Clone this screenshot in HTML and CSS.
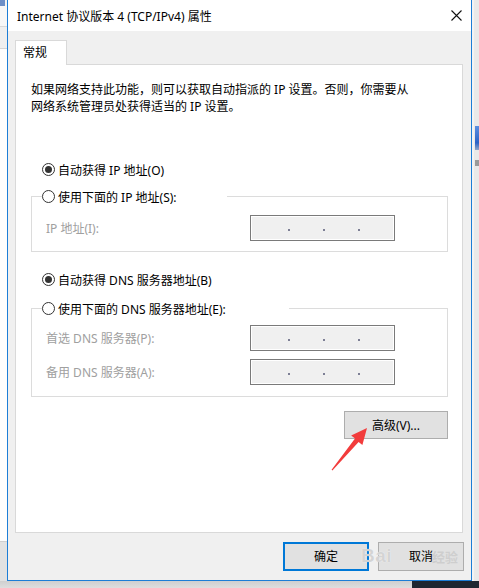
FILE: index.html
```html
<!DOCTYPE html>
<html lang="zh-CN">
<head>
<meta charset="utf-8">
<title>Internet 协议版本 4 (TCP/IPv4) 属性</title>
<link rel="stylesheet" href="styles.css">
</head>
<body>
<div class="screen">
  <div class="left-strip">
    <div class="app-icon"></div>
    <div class="ls-top"></div>
    <div class="ls-box"></div>
    <div class="ls-mid"></div>
    <div class="ls-bottom"></div>
  </div>

  <div class="dialog">
    <div class="titlebar">
      <span class="title">Internet 协议版本 4 (TCP/IPv4) 属性</span>
      <svg class="close" width="11" height="11" viewBox="0 0 11 11"><path d="M0.5 0.5 L10.5 10.5 M10.5 0.5 L0.5 10.5" stroke="#111" stroke-width="1.1" fill="none"/></svg>
    </div>
    <div class="body">
      <div class="tabs">
        <div class="tab">常规</div>
        <div class="tab-fill"></div>
      </div>
      <div class="panel">
        <p class="desc">如果网络支持此功能，则可以获取自动指派的 IP 设置。否则，你需要从<br>网络系统管理员处获得适当的 IP 设置。</p>

        <div class="radio-row r1"><span class="radio checked"></span>自动获得 IP 地址(O)</div>
        <fieldset class="group g1">
          <legend class="legend l1"><span class="radio"></span>使用下面的 IP 地址(S):</legend>
          <div class="field">
            <span class="label">IP 地址(I):</span>
            <div class="ipbox"><i class="dot"></i><i class="dot"></i><i class="dot"></i></div>
          </div>
        </fieldset>

        <div class="radio-row r3"><span class="radio checked"></span>自动获得 DNS 服务器地址(B)</div>
        <fieldset class="group g2">
          <legend class="legend l2"><span class="radio"></span>使用下面的 DNS 服务器地址(E):</legend>
          <div class="field">
            <span class="label">首选 DNS 服务器(P):</span>
            <div class="ipbox"><i class="dot"></i><i class="dot"></i><i class="dot"></i></div>
          </div>
          <div class="field">
            <span class="label">备用 DNS 服务器(A):</span>
            <div class="ipbox"><i class="dot"></i><i class="dot"></i><i class="dot"></i></div>
          </div>
        </fieldset>

        <div class="adv-row"><button class="btn adv">高级(V)...</button></div>
      </div>
      <div class="footer">
        <button class="btn ok">确定</button>
        <button class="btn cancel">取消</button>
      </div>
    </div>
  </div>

  <div class="right-strip">
    <div class="rs-top"></div>
    <div class="rs-img"></div>
    <div class="rs-icon"></div>
  </div>

  <div class="bottom-strip">
    <div class="bs-left"></div>
    <div class="bs-right"></div>
  </div>

  <svg class="arrow" width="55" height="55" viewBox="0 0 55 55">
    <polygon points="47,8 42.4,25 38.6,22 12.4,50.6 11.6,49.8 35,18.6 31.2,15.6" fill="#f23c3c"/>
  </svg>

  <div class="watermark"><span class="wm-bai">Bai</span><span class="wm-jy">经验</span></div>
</div>
</body>
</html>
```

FILE: styles.css
```css
* { box-sizing: border-box; }

html, body {
  margin: 0;
  padding: 0;
  background: #e6e6e6;
}

body {
  font-family: "Noto Sans", "Noto Sans CJK SC", sans-serif;
  font-size: 12px;
  color: #000;
}

.screen {
  position: relative;
  width: 479px;
  height: 588px;
  overflow: hidden;
  display: grid;
  grid-template-columns: 7px 465px 7px;
  grid-template-rows: 581px 7px;
}

/* ---------- desktop strips ---------- */
.left-strip {
  display: flex;
  flex-direction: column;
  background: #f3f3f3;
}
.app-icon {
  width: 5px;
  height: 6px;
  background: #6d8fc7;
  flex: none;
}
.ls-top {
  height: 21px;
  flex: none;
  background: #f7f7f7;
  border-bottom: 1px solid #d8d8d8;
}
.ls-box {
  height: 22px;
  flex: none;
  background: #efefef;
  border-bottom: 1px solid #d4d4d4;
}
.ls-mid {
  flex: 1;
  background: #fdfdfd;
  border-bottom: 1px solid #cfcfcf;
}
.ls-bottom {
  height: 39px;
  flex: none;
  background: #e2e2e2;
}

.right-strip {
  display: flex;
  flex-direction: column;
  background: #e9e9e9;
  border-left: 2px solid #f3f3f3;
}
.rs-top {
  height: 126px;
  flex: none;
}
.rs-img {
  height: 24px;
  flex: none;
  margin-left: 1px;
  background: linear-gradient(180deg, #5b8ee0, #2c63c6 70%, #8fa6c9);
}
.rs-icon {
  width: 5px;
  height: 6px;
  margin-top: 10px;
  margin-left: 1px;
  background: #9a9a9a;
}

.bottom-strip {
  grid-column: 1 / -1;
  display: flex;
}
.bs-left {
  width: 412px;
  background: linear-gradient(180deg, #cfcfcf, #dedede);
}
.bs-right {
  flex: 1;
  background: #1f2731;
}

/* ---------- dialog ---------- */
.dialog {
  display: flex;
  flex-direction: column;
  background: #f0f0f0;
  border: 1px solid #1c7dd6;
  border-top: none;
}

.titlebar {
  height: 31px;
  flex: none;
  background: #fff;
  display: flex;
  align-items: center;
  justify-content: space-between;
  padding: 0 9px 0 9px;
}
.title {
  font-size: 12px;
  color: #000;
  white-space: nowrap;
}
.close {
  display: block;
}

.body {
  flex: 1;
  padding: 9px 8px 9px 7px;
  display: flex;
  flex-direction: column;
}

.tabs {
  display: flex;
  height: 25px;
  flex: none;
}
.tab {
  width: 52px;
  background: #fff;
  border: 1px solid #d9d9d9;
  border-bottom: none;
  padding: 3px 0 0 7px;
  line-height: 17px;
}
.tab-fill {
  flex: 1;
  border-bottom: 1px solid #d9d9d9;
}

.panel {
  height: 468px;
  flex: none;
  background: #fff;
  border: 1px solid #d9d9d9;
  border-top: none;
  padding: 0 14px 0 15px;
}

.desc {
  margin: 16px 0 0;
  line-height: 17px;
  white-space: nowrap;
}

.radio-row {
  display: flex;
  align-items: center;
  height: 17px;
  white-space: nowrap;
}
.r1 { margin-top: 46px; }
.r3 { margin-top: 19px; }

.radio {
  width: 13px;
  height: 13px;
  flex: none;
  border: 1px solid #333;
  border-radius: 50%;
  background: #fff;
  margin: 0 3px 0 11px;
  display: flex;
  align-items: center;
  justify-content: center;
}
.radio.checked::after {
  content: "";
  width: 7px;
  height: 7px;
  border-radius: 50%;
  background: #333;
}

.group {
  margin: 0;
  min-width: 0;
  border: 1px solid #dcdcdc;
  padding: 10px 0 10px 10px;
}
.g1 { margin-top: 10px; }
.g2 {
  margin-top: 12px;
  padding-top: 8px;
  padding-bottom: 11px;
}

.legend {
  display: flex;
  align-items: center;
  height: 17px;
  padding: 0;
  white-space: nowrap;
}
.legend .radio { margin-left: 0; }
.l1 { width: 185px; }
.l2 { width: 247px; }

.field {
  display: grid;
  grid-template-columns: 204px 145px;
  align-items: center;
  padding-left: 4px;
  color: #a0a0a0;
  white-space: nowrap;
}
.field + .field { margin-top: 8px; }

.ipbox {
  height: 26px;
  border: 1px solid #7a7a7a;
  background: #f0f0f0;
  box-shadow: inset 0 0 0 1px #fff;
  display: flex;
  align-items: center;
  padding: 4px 0 0 37px;
  gap: 33px;
}
.dot {
  display: block;
  width: 2px;
  height: 2px;
  background: #7d7f95;
}

.adv-row {
  display: flex;
  justify-content: flex-end;
  margin-top: 14px;
}

.btn {
  font-family: "Noto Sans", "Noto Sans CJK SC", sans-serif;
  font-size: 12px;
  color: #000;
  background: #e1e1e1;
  border: 1px solid #adadad;
  padding: 0;
  margin: 0;
  line-height: 17px;
}
.adv {
  width: 104px;
  height: 28px;
}

.footer {
  display: flex;
  justify-content: flex-end;
  gap: 9px;
  margin: 9px -1px 0 0;
}
.footer .btn {
  width: 86px;
  height: 29px;
}
.footer .ok {
  border: 2px solid #0078d7;
}

/* ---------- overlays ---------- */
.arrow {
  position: absolute;
  left: 320px;
  top: 420px;
}

.watermark {
  position: absolute;
  left: 361px;
  top: 545px;
  display: flex;
  align-items: center;
  pointer-events: none;
}
.wm-bai {
  font-family: "Liberation Sans", sans-serif;
  font-weight: bold;
  font-size: 19px;
  color: rgba(205, 205, 205, 0.85);
  text-shadow: 0 0 1px #fff;
  letter-spacing: 0.5px;
}
.wm-jy {
  margin-left: 40px;
  font-size: 13px;
  font-weight: bold;
  color: rgba(200, 200, 200, 0.75);
}
```
